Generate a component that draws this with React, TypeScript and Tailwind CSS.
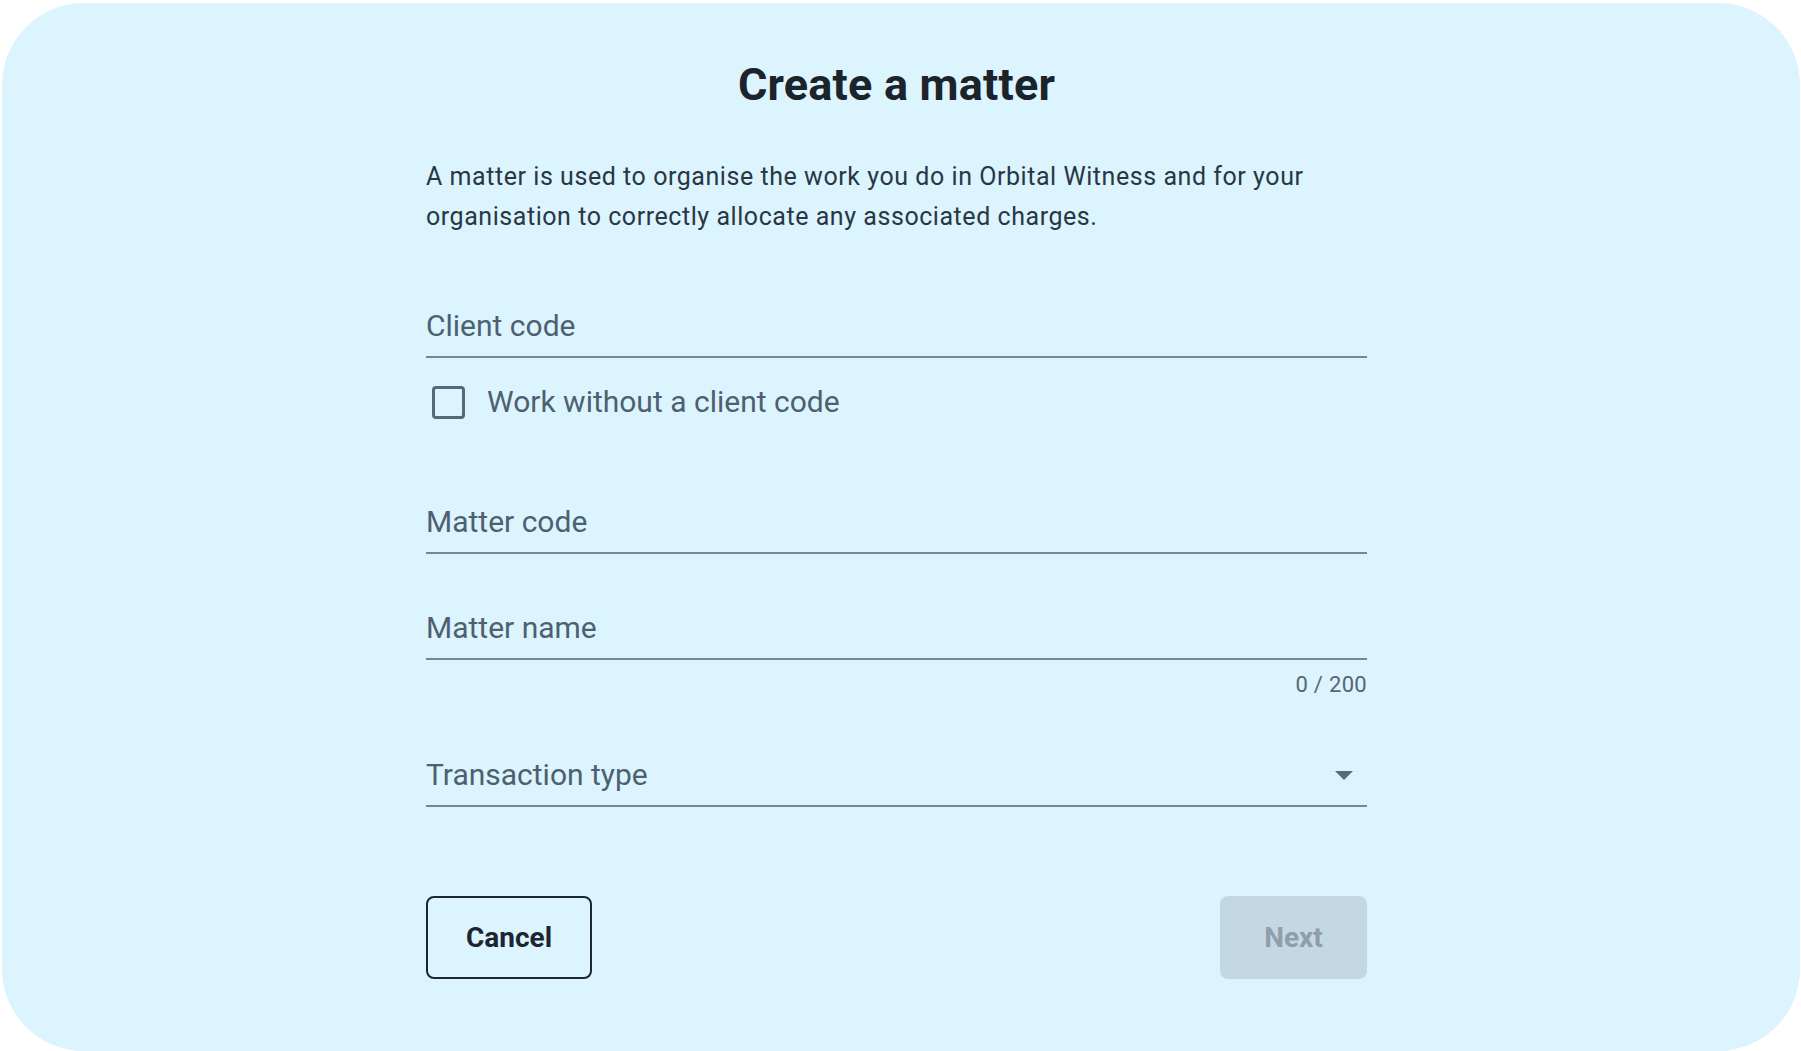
import React from "react";

type FieldProps = {
  label: string;
  className?: string;
  select?: boolean;
};

function UnderlineField({ label, className = "", select = false }: FieldProps) {
  return (
    <div className={`flex items-center justify-between border-b-2 border-[#74879a] pb-[12px] ${className}`}>
      <span className="text-[30px] leading-[36px] text-[#4e6070]">{label}</span>
      {select && (
        <svg width="18" height="9" viewBox="0 0 18 9" className="mr-[14px]">
          <path d="M0 0h18L9 9z" fill="#586b7b" />
        </svg>
      )}
    </div>
  );
}

export default function App() {
  return (
    <div className="min-h-screen bg-white pl-[2px] pt-[3px] font-['Roboto','Liberation_Sans',sans-serif]">
      <div className="h-[1048px] w-[1798px] rounded-[82px] bg-[#dbf4fe] pl-[424px] pt-[55px]">
        <div className="flex w-[941px] flex-col">
          <h1 className="text-center text-[45px] font-bold leading-[54px] tracking-[0.2px] text-[#1b232b]">
            Create a matter
          </h1>

          <p className="mt-[45px] text-[25px] leading-[40px] tracking-[0.55px] text-[#293744]">
            A matter is used to organise the work you do in Orbital Witness and for your organisation to
            correctly allocate any associated charges.
          </p>

          <UnderlineField label="Client code" className="mt-[71px]" />

          <label className="mt-[26px] flex h-[36px] items-center">
            <span className="ml-[6px] h-[33px] w-[33px] rounded-[4px] border-[3px] border-[#56697a]" />
            <span className="ml-[22px] text-[30px] leading-[36px] text-[#4e6070]">Work without a client code</span>
          </label>

          <UnderlineField label="Matter code" className="mt-[84px]" />

          <UnderlineField label="Matter name" className="mt-[56px]" />
          <div className="mt-[12px] text-right text-[22px] leading-[26px] tracking-[0.3px] text-[#566675]">0 / 200</div>

          <UnderlineField label="Transaction type" className="mt-[59px]" select />

          <div className="mt-[89px] flex items-center justify-between">
            <button className="h-[83px] w-[166px] rounded-[8px] border-2 border-[#1d2731] text-[28px] font-bold text-[#1d2630]">
              Cancel
            </button>
            <button
              disabled
              className="h-[83px] w-[147px] rounded-[8px] bg-[#c4d8e3] text-[28px] font-bold text-[#8e9faa]"
            >
              Next
            </button>
          </div>
        </div>
      </div>
    </div>
  );
}
